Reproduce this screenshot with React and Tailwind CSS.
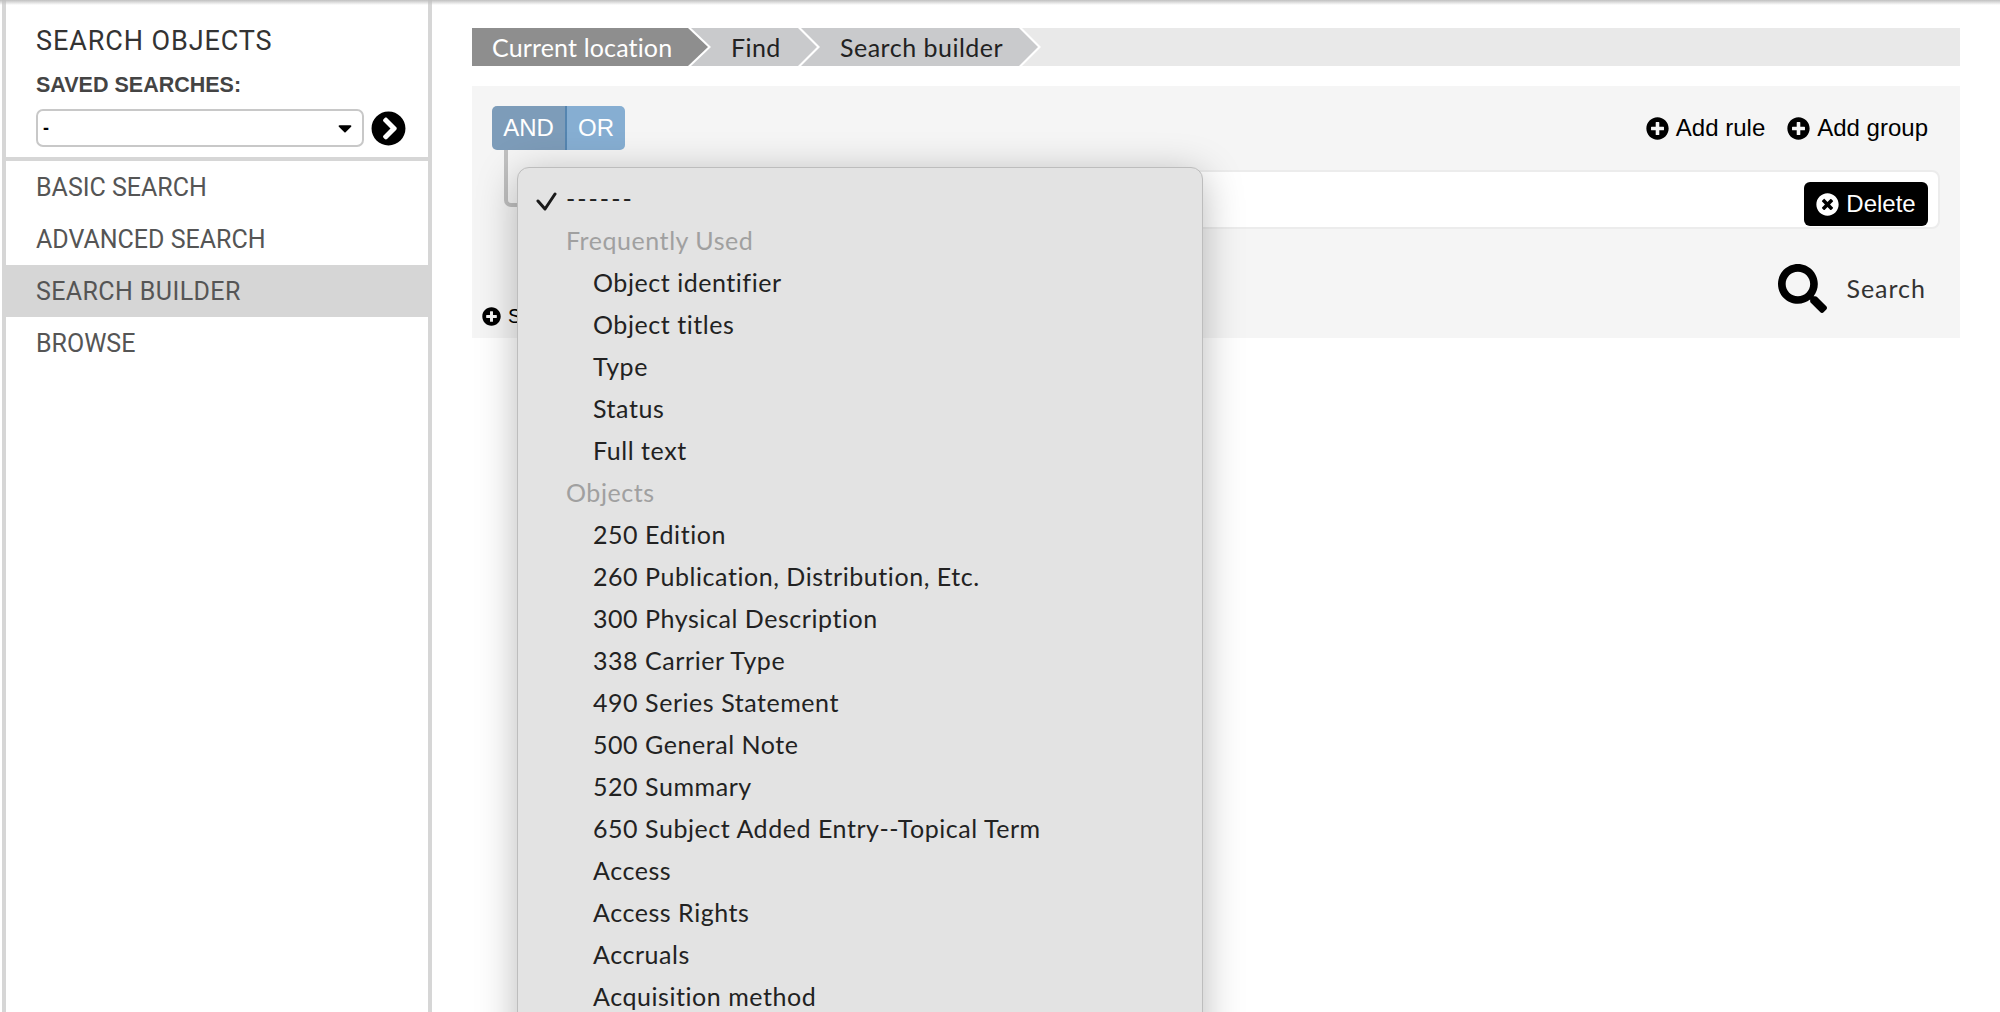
import React from "react";
import { FaPlusCircle, FaTimesCircle, FaChevronCircleRight, FaSearch, FaCaretDown } from "react-icons/fa";

const navItems = ["BASIC SEARCH", "ADVANCED SEARCH", "SEARCH BUILDER", "BROWSE"];

const menuItems = [
    { label: "------", kind: "checked" },
    { label: "Frequently Used", kind: "group" },
    { label: "Object identifier" },
    { label: "Object titles" },
    { label: "Type" },
    { label: "Status" },
    { label: "Full text" },
    { label: "Objects", kind: "group" },
    { label: "250 Edition" },
    { label: "260 Publication, Distribution, Etc." },
    { label: "300 Physical Description" },
    { label: "338 Carrier Type" },
    { label: "490 Series Statement" },
    { label: "500 General Note" },
    { label: "520 Summary" },
    { label: "650 Subject Added Entry--Topical Term" },
    { label: "Access" },
    { label: "Access Rights" },
    { label: "Accruals" },
    { label: "Acquisition method" },
];

function Sidebar() {
    return (
        <aside className="w-[430px] h-full shrink-0 ml-[2px] bg-white border-x-4 border-[#d6d6d6] flex flex-col">
            <div className="h-[157px] pl-[30px] pt-[25px]">
                <h2 className="text-[27px] leading-[32px] tracking-[0.9px] text-[#333] font-['Roboto',sans-serif]">SEARCH OBJECTS</h2>
                <div className="mt-[16px] text-[21.5px] leading-[24px] font-bold text-[#444] font-['Liberation_Sans',sans-serif]">
                    SAVED SEARCHES:
                </div>
                <div className="mt-[12px] flex items-center gap-[7px]">
                    <div className="w-[328px] h-[38px] px-[5px] flex items-center justify-between border-2 border-[#c8c8c8] rounded-[7px] bg-white text-[18px] font-['Liberation_Sans',sans-serif] text-black">
                        <span className="font-bold">-</span>
                        <FaCaretDown className="w-[22px] h-[22px] mr-[1px]" />
                    </div>
                    <FaChevronCircleRight className="w-[35px] h-[35px] text-black" />
                </div>
            </div>
            <div className="h-[4px] bg-[#d6d6d6]" />
            {navItems.map((item) => (
                <div
                    key={item}
                    className={`h-[52px] pl-[30px] pt-[2px] flex items-center text-[25px] text-[#555] font-['Roboto',sans-serif] ${
                        item === "SEARCH BUILDER" ? "bg-[#d6d6d6] tracking-[0.4px]" : ""
                    }`}
                >
                    {item}
                </div>
            ))}
        </aside>
    );
}

function Breadcrumb() {
    return (
        <div className="h-[38px] bg-[#e9e9e9] flex text-[25px] font-['Lato',sans-serif]">
            {/* white outer shape gives the chevron edge, earlier crumbs sit on top of later ones */}
            <div className="relative z-30 w-[239px] h-[38px] bg-white [clip-path:polygon(0_0,219px_0,100%_50%,219px_100%,0_100%)]">
                <div className="h-full pl-[20px] pt-[1px] flex items-center bg-[#8e8e8e] text-white tracking-[0.15px] [clip-path:polygon(0_0,216px_0,236px_50%,216px_100%,0_100%)]">
                    Current location
                </div>
            </div>
            <div className="relative z-20 w-[130px] h-[38px] -ml-[21px] bg-white [clip-path:polygon(0_0,111px_0,100%_50%,111px_100%,0_100%)]">
                <div className="h-full pl-[41px] pt-[1px] flex items-center bg-[#c9cacc] text-[#222] tracking-[0.4px] [clip-path:polygon(0_0,108px_0,127px_50%,108px_100%,0_100%)]">
                    Find
                </div>
            </div>
            <div className="relative z-10 w-[241px] h-[38px] -ml-[20px] bg-white [clip-path:polygon(0_0,222px_0,100%_50%,222px_100%,0_100%)]">
                <div className="h-full pl-[40px] pt-[1px] flex items-center bg-[#c9cacc] text-[#222] tracking-[0.5px] [clip-path:polygon(0_0,219px_0,238px_50%,219px_100%,0_100%)]">
                    Search builder
                </div>
            </div>
        </div>
    );
}

function Menu() {
    return (
        <div className="absolute z-40 left-[517px] top-[167px] w-[686px] h-[900px] pt-[10px] bg-[#e3e3e3] border border-[#bdbdbd] rounded-[12px] shadow-[0_8px_40px_rgba(0,0,0,0.28)] font-['Lato',sans-serif] text-[25px] tracking-[0.55px]">
            {menuItems.map((item) => (
                <div
                    key={item.label}
                    className={`h-[42px] flex items-center relative ${
                        item.kind === "group"
                            ? "pl-[48px] text-[#a0a0a0]"
                            : item.kind === "checked"
                            ? "pl-[48px] text-[#222] tracking-[2px]"
                            : "pl-[75px] text-[#222]"
                    }`}
                >
                    {item.kind === "checked" && (
                        <svg
                            className="absolute left-[17px] top-[9px] w-[23px] h-[24px]"
                            viewBox="0 0 23 24"
                            fill="none"
                            stroke="#1a1a1a"
                            strokeWidth="3"
                            strokeLinecap="round"
                            strokeLinejoin="round"
                        >
                            <path d="M3 14l7 8L20 7" />
                        </svg>
                    )}
                    {item.label}
                </div>
            ))}
        </div>
    );
}

export default function App() {
    return (
        <div className="relative h-[1012px] overflow-hidden bg-white flex">
            <Sidebar />
            <main className="flex-1 pl-[40px] pr-[40px] pt-[28px]">
                <Breadcrumb />
                <div className="relative mt-[20px] h-[252px] bg-[#f5f5f5] pt-[20px] pl-[20px] pr-[20px]">
                    <div className="h-[44px] flex items-center justify-between">
                        <div className="flex h-[44px] rounded-[5px] overflow-hidden text-white text-[24px] font-['Liberation_Sans',sans-serif]">
                            <span className="w-[75px] flex items-center justify-center bg-[#7d9cb9] border-r-2 border-[#5585b0]">AND</span>
                            <span className="w-[58px] flex items-center justify-center bg-[#86aed2]">OR</span>
                        </div>
                        <div className="flex items-center gap-[22px] pr-[12px] text-[24px] text-black font-['Liberation_Sans',sans-serif]">
                            <span className="flex items-center gap-[7px]">
                                <FaPlusCircle className="w-[23px] h-[23px]" />
                                Add rule
                            </span>
                            <span className="flex items-center gap-[7px]">
                                <FaPlusCircle className="w-[23px] h-[23px]" />
                                Add group
                            </span>
                        </div>
                    </div>
                    <div className="absolute left-[32px] top-[64px] w-[40px] h-[57px] border-l-4 border-b-4 border-[#c0c0c0] rounded-bl-[7px]" />
                    <div className="mt-[20px] ml-[40px] h-[59px] bg-white border-2 border-[#ececec] rounded-[8px] flex items-end justify-end pr-[10px] pb-[1px]">
                        <button className="w-[124px] h-[44px] bg-black rounded-[6px] text-white flex items-center justify-center gap-[7px] text-[24px] font-['Liberation_Sans',sans-serif]">
                            <FaTimesCircle className="w-[23px] h-[23px]" />
                            Delete
                        </button>
                    </div>
                    <div className="mt-[35px] flex items-start justify-between pr-[14px]">
                        <span className="-ml-[10px] mt-[37px] flex items-center gap-[7px] text-[20px] text-black font-['Liberation_Sans',sans-serif]">
                            <FaPlusCircle className="w-[19px] h-[19px]" />
                            Save
                        </span>
                        <span className="flex items-center gap-[19px] text-[25px] tracking-[1px] text-[#333] font-['Lato',sans-serif]">
                            <FaSearch className="w-[49px] h-[49px] text-black" />
                            Search
                        </span>
                    </div>
                </div>
            </main>
            <Menu />
            <div className="absolute z-50 inset-x-0 top-0 h-[5px] bg-gradient-to-b from-[#c0c0c0] to-transparent" />
        </div>
    );
}
